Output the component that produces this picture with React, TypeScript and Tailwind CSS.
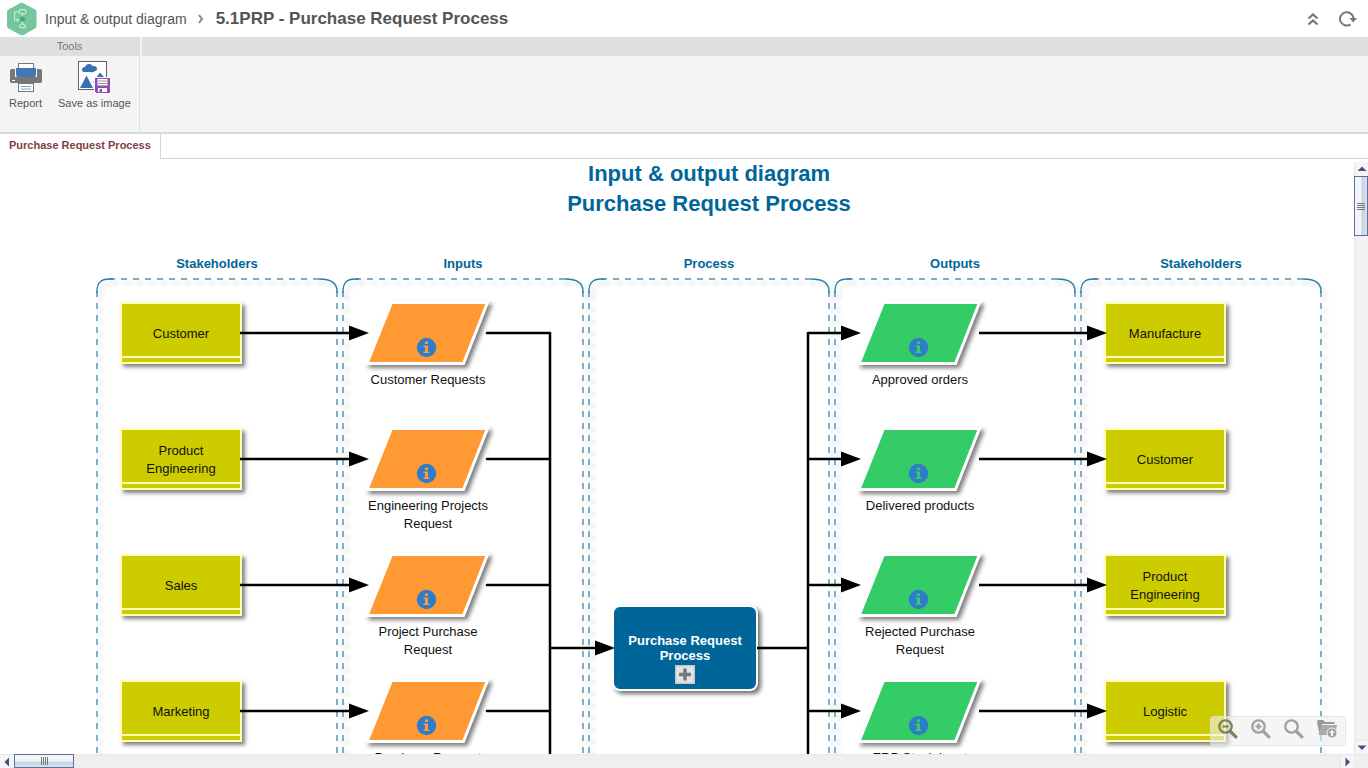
import type { ReactNode } from "react";

type Point = { text: string; row: number };

const ROW_STEP = 126;
const ROWS = [0, 1, 2, 3];

const leftStakeholders: Point[] = [
  { text: "Customer", row: 0 },
  { text: "Product Engineering", row: 1 },
  { text: "Sales", row: 2 },
  { text: "Marketing", row: 3 },
];

const rightStakeholders: Point[] = [
  { text: "Manufacture", row: 0 },
  { text: "Customer", row: 1 },
  { text: "Product Engineering", row: 2 },
  { text: "Logistic", row: 3 },
];

const inputs: Point[] = [
  { text: "Customer Requests", row: 0 },
  { text: "Engineering Projects Request", row: 1 },
  { text: "Project Purchase Request", row: 2 },
  { text: "Purchase Request", row: 3 },
];

const outputs: Point[] = [
  { text: "Approved orders", row: 0 },
  { text: "Delivered products", row: 1 },
  { text: "Rejected Purchase Request", row: 2 },
  { text: "ERP Stock Input", row: 3 },
];

const headings = ["Stakeholders", "Inputs", "Process", "Outputs", "Stakeholders"];

function LogoIcon() {
  return (
    <svg width="32" height="34" viewBox="0 0 32 34" aria-hidden="true">
      <path d="M16 0.5 L29 7.5 Q30.500 8.400 30.500 10 V24 Q30.500 25.600 29 26.500 L17.500 33 Q16 33.700 14.500 33 L2.500 26.500 Q1 25.600 1 24 V10 Q1 8.400 2.500 7.500 L14.500 1 Q16 0.200 17.500 1 Z" fill="#74c69d" />
      <g fill="none" stroke="#c4e8d5" strokeWidth="1.200" strokeLinejoin="round">
        <rect x="13.300" y="7.600" width="6.500" height="4" rx="1" />
        <path d="M12.500 9.800 H8.600 V18 H12.500 M11 16.500 L12.500 18 L11 19.500" />
        <path d="M16.500 12 V14.500 M16.500 19.500 V21.500" />
        <path d="M16.500 21.500 L19.500 24 Q19.800 25.700 18.500 25.700 H14.500 Q13.200 25.700 13.500 24 Z" />
      </g>
      <circle cx="16.500" cy="17" r="2.500" fill="#3fa978" />
    </svg>
  );
}

function CollapseIcon() {
  return (
    <svg width="10" height="12" viewBox="0 0 10 12" fill="none" stroke="#777" strokeWidth="2.200" aria-hidden="true">
      <path d="M0.500 5.500 L5 1.500 L9.500 5.500 M0.500 11.500 L5 7.500 L9.500 11.500" />
    </svg>
  );
}

function RefreshIcon() {
  return (
    <svg width="18" height="16" viewBox="0 0 18 16" aria-hidden="true">
      <path d="M11.500 13.400 A6.700 6.700 0 1 1 14.400 8.500" fill="none" stroke="#777" strokeWidth="2" />
      <path d="M10.500 7 H18 L14.200 11.500 Z" fill="#777" />
    </svg>
  );
}

function PrinterIcon() {
  return (
    <svg width="32" height="30" viewBox="0 0 32 30" aria-hidden="true">
      <rect x="8.500" y="0.500" width="15" height="8" fill="#fff" stroke="#777" />
      <path d="M1.500 6 H5 V14 H27 V6 H30.500 Q32 6 32 7.500 V18 Q32 20 30.500 20 H1.500 Q0 20 0 18 V7.500 Q0 6 1.500 6 Z" fill="#777" />
      <path d="M6 5 H26 V12 L25 14 H7 L6 12 Z" fill="#4377b8" />
      <rect x="2" y="17" width="3" height="1" fill="#fff" />
      <rect x="8.500" y="20.500" width="15" height="8" fill="#fff" stroke="#777" />
      <path d="M11 23.500 H21 M11 26 H21" stroke="#78a3d4" />
    </svg>
  );
}

function SaveImageIcon() {
  return (
    <svg width="32" height="33" viewBox="0 0 32 33" aria-hidden="true">
      <rect x="0.500" y="0.500" width="28" height="28" fill="#fff" stroke="#606060" />
      <path d="M6 11 Q3.500 10.500 4 8 Q4.500 6 7 6 Q8 3 11 3 Q14 3 14.500 5 Q19 4.500 19 8 Q19 10 17 10 Q15 12 12 11 Z" fill="#3b6fb3" />
      <path d="M2 27 L8.500 14.500 L15 27 Z" fill="#3b6fb3" />
      <path d="M15 21 L22 11.500 L27 17 V22 H17 Z" fill="#3b6fb3" />
      <rect x="16" y="16" width="16" height="17" fill="#fff" />
      <path d="M17 17 H32 V32 H18.500 L17 30.500 Z" fill="#924bb0" />
      <rect x="19.500" y="18" width="10" height="6.500" fill="#fff" />
      <path d="M20 20 H29 M20 22.500 H29" stroke="#999" />
      <rect x="20" y="27" width="9" height="4" fill="#fff" />
      <rect x="21.500" y="28" width="2.500" height="3" fill="#924bb0" />
    </svg>
  );
}

function ToolButton({ label, children }: { label: string; children: ReactNode }) {
  return (
    <button type="button" className="flex flex-col items-center">
      <span className="flex h-[34px] items-start">{children}</span>
      <span className="text-[11px] leading-4">{label}</span>
    </button>
  );
}

function StakeholderBox({ text, row, side }: Point & { side: "left" | "right" }) {
  return (
    <div
      className={`absolute flex h-[62px] w-[122px] flex-col border-2 border-[#ffffb8] bg-[#cccc00] shadow-[3px_3px_4px_rgba(0,0,0,0.5)] ${side === "left" ? "left-[120px]" : "left-[1104px]"}`}
      style={{ top: 143 + row * ROW_STEP }}
    >
      <span className="flex flex-1 items-center justify-center px-4 pt-2 text-center text-[13px] leading-[18px]">
        {text}
      </span>
      <span className="h-1.5 border-t-2 border-[#ffffb8]" />
    </div>
  );
}

function FlowNode({ text, row, kind }: Point & { kind: "input" | "output" }) {
  const fill = kind === "input" ? "#ff9933" : "#33cc66";
  return (
    <div
      className={`absolute flex w-[132px] flex-col items-center ${kind === "input" ? "left-[362px]" : "left-[854px]"}`}
      style={{ top: 141 + row * ROW_STEP }}
    >
      <svg width="132" height="71" viewBox="0 0 132 71" aria-hidden="true" className="drop-shadow-[3px_3px_2px_rgba(0,0,0,0.5)]">
        <path d="M29.500 2.500 H125.500 L101.500 63.500 H5 Z" fill={fill} stroke="#fff" strokeWidth="3" />
        <circle cx="64.500" cy="47.500" r="9.700" fill="#2f7dca" />
        <path d="M63 41.500 h3 v2.500 h-3 z M61.500 45.500 h4.500 v6 h1.500 v1.500 h-6 v-1.500 h1.500 v-4.500 h-1.500 z" fill={fill} />
      </svg>
      <span className="w-[130px] text-center text-[13px] leading-[18px]">{text}</span>
    </div>
  );
}

function ColumnFrame({ index }: { index: number }) {
  const x = 97 + index * 246;
  return (
    <g transform={`translate(${x} 120)`} fill="none">
      <g stroke="#7ab0cc" strokeWidth="2" strokeDasharray="6 6">
        <path d="M12 0 H222" />
        <path d="M0 12 V500" />
        <path d="M240 12 V500" />
      </g>
      <path d="M0 14 V12 Q0 0 12 0 H16 M222 0 Q240 0 240 12 V14" stroke="#2a7fa9" strokeWidth="1.300" />
    </g>
  );
}

function Arrow({ from, to, y }: { from: number; to: number; y: number }) {
  return (
    <g>
      <path d={`M${from} ${y} H${to - 16}`} stroke="#000" strokeWidth="2.500" />
      <path d={`M${to - 20} ${y - 7.5} L${to} ${y} L${to - 20} ${y + 7.5} Z`} fill="#000" />
    </g>
  );
}

function Connectors() {
  return (
    <g fill="none">
      <path d="M550 174 V600 M757 489 H808 M808 600 V173" stroke="#000" strokeWidth="2.500" />
      <Arrow from={550} to={615} y={489} />
      {ROWS.map((row) => {
        const y = 174 + row * ROW_STEP;
        return (
          <g key={row}>
            <Arrow from={240} to={369} y={y} />
            <path d={`M487 ${y} H550`} stroke="#000" strokeWidth="2.500" strokeLinecap="round" />
            <Arrow from={808} to={861} y={y} />
            <Arrow from={979} to={1107} y={y} />
          </g>
        );
      })}
    </g>
  );
}

function Diagram() {
  return (
    <div className="relative h-full w-[1418px] text-[#111]">
      <header className="text-center text-[22px] leading-[30px] font-bold text-[#006699]">
        <h1>Input &amp; output diagram</h1>
        <h2>Purchase Request Process</h2>
      </header>
      <div className="mt-9 grid grid-cols-5 gap-x-1.5 px-[97px] text-center text-[13px] leading-[18px] font-bold text-[#006699]">
        {headings.map((heading, index) => (
          <h3 key={index}>{heading}</h3>
        ))}
      </div>
      <svg width="1418" height="600" className="absolute top-0 left-0 drop-shadow-[4px_4px_2px_rgba(0,0,0,0.15)]" aria-hidden="true">
        {headings.map((_, index) => (
          <ColumnFrame key={index} index={index} />
        ))}
      </svg>
      {leftStakeholders.map((item) => (
        <StakeholderBox key={item.row} {...item} side="left" />
      ))}
      {rightStakeholders.map((item) => (
        <StakeholderBox key={item.row} {...item} side="right" />
      ))}
      {inputs.map((item) => (
        <FlowNode key={item.row} {...item} kind="input" />
      ))}
      {outputs.map((item) => (
        <FlowNode key={item.row} {...item} kind="output" />
      ))}
      <div className="absolute top-[446px] left-[612px] flex h-[86px] w-[146px] flex-col items-center rounded-lg border-2 border-white bg-[#006699] px-3 pt-[26px] text-center text-[13px] leading-[15px] font-bold text-white shadow-[3px_3px_4px_rgba(0,0,0,0.55)]">
        <span>Purchase Request Process</span>
        <button type="button" aria-label="Expand process" className="mt-0.5">
          <svg width="20" height="19" viewBox="0 0 20 19" aria-hidden="true">
            <rect width="20" height="19" fill="#c8c8c8" />
            <rect x="1.500" y="1.500" width="17" height="16" fill="#e4e4e4" />
            <path d="M10 3.500 V15.500 M4 9.500 H16" stroke="#777" strokeWidth="3.500" />
          </svg>
        </button>
      </div>
      <svg width="1418" height="600" className="pointer-events-none absolute top-0 left-0" aria-hidden="true">
        <Connectors />
      </svg>
    </div>
  );
}

function MagnifierIcon({ sign }: { sign?: "plus" | "minus" }) {
  return (
    <svg width="20" height="20" viewBox="0 0 20 20" fill="none" aria-hidden="true">
      <circle cx="7.500" cy="7.500" r="6.200" stroke="currentColor" strokeWidth="2.300" />
      <path d="M12 12 L18.800 18.800" stroke="currentColor" strokeWidth="3.200" />
      {sign && <path d={sign === "plus" ? "M4.500 7.500 H10.500 M7.500 4.500 V10.500" : "M4.500 7.500 H10.500"} stroke="currentColor" strokeWidth="2" />}
    </svg>
  );
}

function FolderIcon() {
  return (
    <svg width="21" height="20" viewBox="0 0 21 20" aria-hidden="true">
      <path d="M0 3 Q0 1 1.500 1 H6 L8 3 H16 Q18 3 18 5 H5 L2.500 15 Z" fill="#999" />
      <path d="M5 6 H20 L18 16 H1.500 Z" fill="#aaa" />
      <circle cx="15" cy="14" r="5" fill="#a0a0a0" stroke="#f0f0f0" />
      <path d="M15 10.800 L18 14 H16 V17 H14 V14 H12 Z" fill="#f4f4f4" />
    </svg>
  );
}

function ZoomBar() {
  return (
    <div className="absolute right-2 bottom-2 flex h-[30px] w-[136px] items-center justify-between rounded-sm border border-[#dedede]/70 bg-[#eeeeee]/60 px-[7px] pb-1 text-[#a0a0a0]">
      <button type="button" aria-label="Zoom out" className="text-[#77774a]/90"><MagnifierIcon sign="minus" /></button>
      <button type="button" aria-label="Zoom in"><MagnifierIcon sign="plus" /></button>
      <button type="button" aria-label="Fit to window"><MagnifierIcon /></button>
      <button type="button" aria-label="Export diagram"><FolderIcon /></button>
    </div>
  );
}

function Triangle({ d, vertical }: { d: string; vertical?: boolean }) {
  return (
    <svg width={vertical ? 10 : 6} height={vertical ? 6 : 10} viewBox={vertical ? "0 0 10 6" : "0 0 6 10"} aria-hidden="true">
      <path d={d} fill="#41527f" />
    </svg>
  );
}

function VerticalScrollbar() {
  return (
    <div className="mt-[3px] flex w-3.5 shrink-0 flex-col border-l border-[#e6e6e6] bg-[#f1f1f1]">
      <button type="button" aria-label="Scroll up" className="flex h-3.5 items-center justify-center bg-[#f5f5f5]">
        <Triangle vertical d="M0.500 5 L5 0.500 L9.500 5 Z" />
      </button>
      <div className="-ml-px flex h-[60px] flex-col items-center justify-center gap-px border border-[#5a6f9c] bg-linear-to-r from-[#f4f5f7] from-50% via-[#c3d0e2] via-60% to-[#dce4ee]">
        {ROWS.map((line) => (
          <span key={line} className="h-px w-2 bg-[#777]" />
        ))}
      </div>
      <div className="flex-1" />
      <button type="button" aria-label="Scroll down" className="flex h-3.5 items-center justify-center border-t border-[#e6e6e6] bg-[#f5f5f5]">
        <Triangle vertical d="M0.500 0.500 L5 5 L9.500 0.500 Z" />
      </button>
    </div>
  );
}

function HorizontalScrollbar() {
  return (
    <div className="flex h-3.5 shrink-0 border-t border-[#e8e8e8] bg-[#efefef] pr-3.5">
      <button type="button" aria-label="Scroll left" className="flex w-3.5 items-center justify-center bg-[#f5f5f5]">
        <Triangle d="M5 0.500 L0.500 5 L5 9.500 Z" />
      </button>
      <div className="-mt-px flex w-[60px] items-center justify-center gap-px border border-[#5a6f9c] bg-linear-to-b from-[#f4f5f7] from-50% via-[#c3d0e2] via-60% to-[#dce4ee]">
        {ROWS.map((line) => (
          <span key={line} className="h-2 w-px bg-[#777]" />
        ))}
      </div>
      <div className="flex-1" />
      <button type="button" aria-label="Scroll right" className="flex w-3.5 items-center justify-center border-l border-[#e6e6e6] bg-[#f5f5f5]">
        <Triangle d="M0.500 0.500 L5 5 L0.500 9.500 Z" />
      </button>
    </div>
  );
}

export default function App() {
  return (
    <div className="flex h-screen flex-col overflow-hidden bg-white font-['Liberation_Sans',Arial,sans-serif] text-[#555]">
      <header className="flex h-[37px] shrink-0 items-center justify-between pr-[11px] pl-1.5">
        <nav aria-label="Breadcrumb" className="flex items-center">
          <LogoIcon />
          <a href="#diagrams" className="ml-[7px] text-sm">Input &amp; output diagram</a>
          <svg width="6" height="10" viewBox="0 0 6 10" className="mr-3 ml-[11px]" aria-hidden="true">
            <path d="M1 1 L4 5 L1 9" fill="none" stroke="#888" strokeWidth="2" />
          </svg>
          <span className="text-[17px] font-bold">5.1PRP - Purchase Request Process</span>
        </nav>
        <div className="flex items-center gap-[21px]">
          <button type="button" aria-label="Collapse toolbar"><CollapseIcon /></button>
          <button type="button" aria-label="Refresh"><RefreshIcon /></button>
        </div>
      </header>

      <section aria-label="Tools" className="flex h-[97px] shrink-0 border-b-2 border-[#dadada] bg-[#f4f4f4]">
        <div className="flex w-[140px] flex-col border-r border-[#dfdfdf]">
          <h2 className="h-[19px] bg-[#dfdfdf] text-center text-[11px] leading-[19px] text-[#777]">Tools</h2>
          <div className="flex gap-4 pt-[5px] pl-[9px]">
            <ToolButton label="Report">
              <span className="pt-0.5"><PrinterIcon /></span>
            </ToolButton>
            <ToolButton label="Save as image"><SaveImageIcon /></ToolButton>
          </div>
        </div>
        <div className="ml-0.5 h-[19px] flex-1 bg-[#dfdfdf]" />
      </section>

      <div role="tablist" className="flex h-[25px] shrink-0">
        <button type="button" role="tab" aria-selected="true" className="border-r border-[#d8d4d6] px-[9px] pb-[3px] text-[11px] font-bold text-[#80403f]">
          Purchase Request Process
        </button>
        <div className="flex-1 border-b border-[#d8d4d6]" />
      </div>

      <main className="flex min-h-0 flex-1">
        <div className="relative min-w-0 flex-1 overflow-hidden">
          <Diagram />
          <ZoomBar />
        </div>
        <VerticalScrollbar />
      </main>
      <HorizontalScrollbar />
    </div>
  );
}
